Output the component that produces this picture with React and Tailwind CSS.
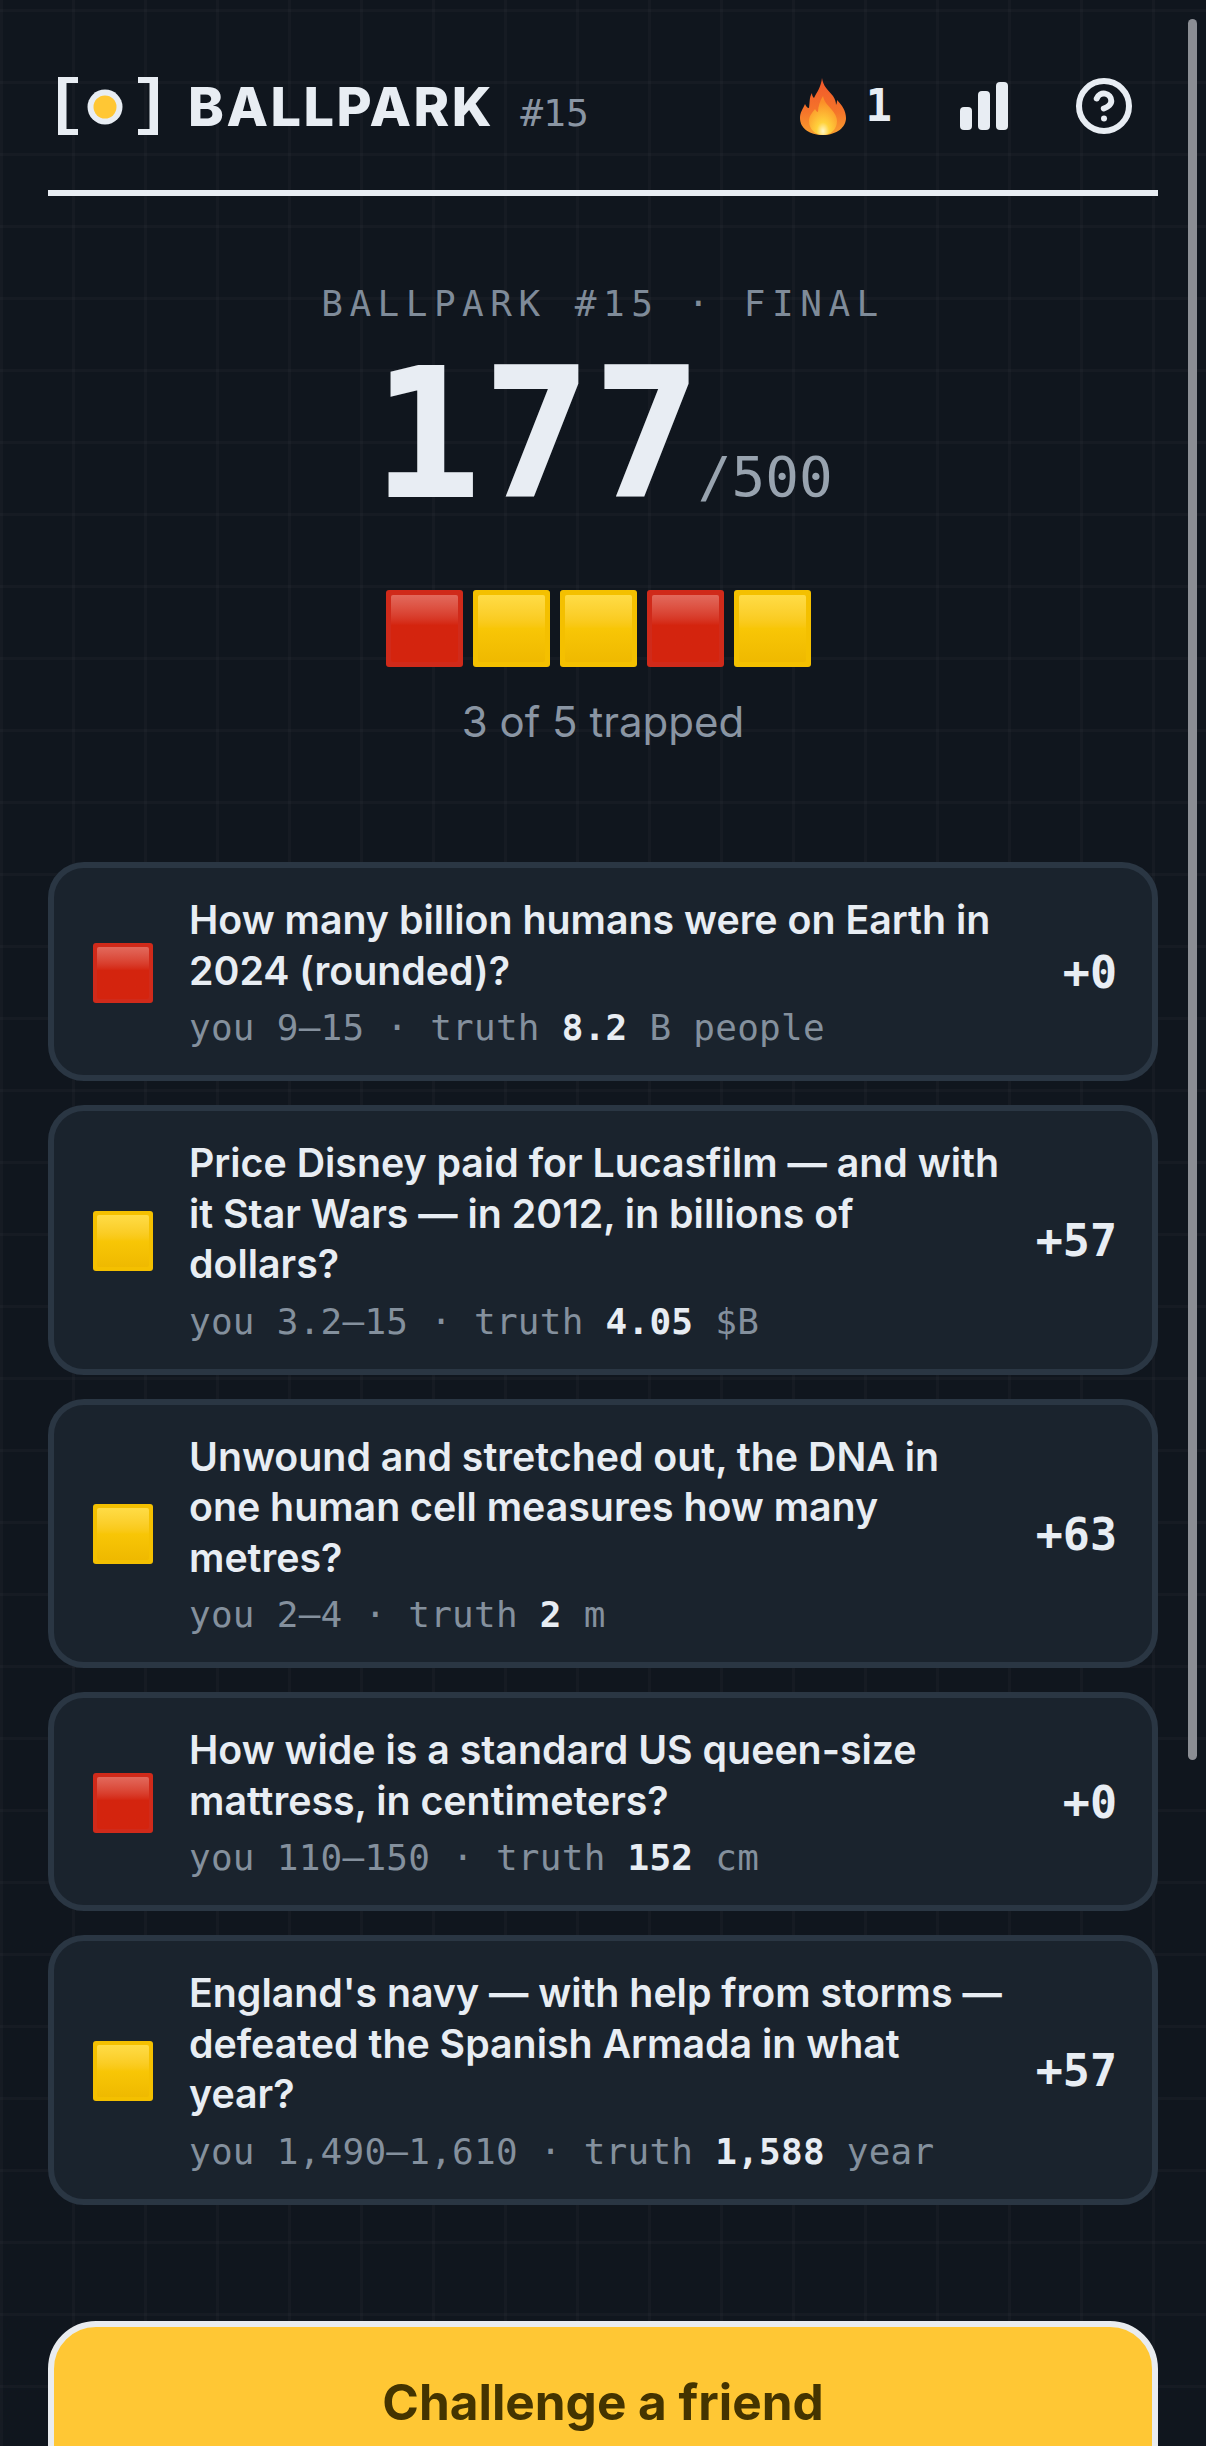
import { CircleHelp } from "lucide-react";

const rounds = [
  { id: 1, trapped: false, question: "How many billion humans were on Earth in 2024 (rounded)?", range: "9—15", truth: "8.2", unit: "B people", score: "+0" },
  { id: 2, trapped: true, question: "Price Disney paid for Lucasfilm — and with it Star Wars — in 2012, in billions of dollars?", range: "3.2—15", truth: "4.05", unit: "$B", score: "+57" },
  { id: 3, trapped: true, question: "Unwound and stretched out, the DNA in one human cell measures how many metres?", range: "2—4", truth: "2", unit: "m", score: "+63" },
  { id: 4, trapped: false, question: "How wide is a standard US queen-size mattress, in centimeters?", range: "110—150", truth: "152", unit: "cm", score: "+0" },
  { id: 5, trapped: true, question: "England's navy — with help from storms — defeated the Spanish Armada in what year?", range: "1,490—1,610", truth: "1,588", unit: "year", score: "+57" },
];

const MONO = "font-['DejaVu_Sans_Mono','Liberation_Mono',monospace]";

function Square({ yellow, big }) {
  const size = big ? "h-[77px] w-[77px] p-[5px]" : "mb-[3px] h-[60px] w-[60px] p-[4px]";
  const outer = yellow ? "bg-[#f4c000]" : "bg-[#d02a1a]";
  const inner = yellow
    ? "bg-gradient-to-b from-[#ffdc45] via-[#f8c606] via-50% to-[#efb900]"
    : "bg-gradient-to-b from-[#e2695c] via-[#d4240e] via-45% to-[#d4240e]";
  return (
    <div className={`${size} ${outer} shrink-0 rounded-[3px]`}>
      <div className={`h-full w-full rounded-[2px] ${inner}`} />
    </div>
  );
}

function Logo() {
  return (
    <svg width="100" height="58" viewBox="0 0 100 58" className="shrink-0">
      <path d="M0 0h20v6H8.5v46H20v6H0z" fill="#e8edf3" />
      <path d="M80 0h20v58H80v-6h11.5V6H80z" fill="#e8edf3" />
      <circle cx="47" cy="30" r="17.5" fill="#e8edf3" />
      <circle cx="47" cy="30" r="11.5" fill="#ffc734" />
    </svg>
  );
}

function Flame() {
  return (
    <svg width="46" height="57" viewBox="0 0 46 57" className="shrink-0">
      <defs>
        <linearGradient id="flameOuter" x1="0" y1="0" x2="0" y2="1">
          <stop offset="0" stopColor="#f0562b" />
          <stop offset="0.6" stopColor="#f5752a" />
          <stop offset="1" stopColor="#f9a02f" />
        </linearGradient>
        <radialGradient id="flameInner" cx="0.5" cy="0.9" r="0.75">
          <stop offset="0" stopColor="#fff6c8" />
          <stop offset="0.3" stopColor="#ffd23c" />
          <stop offset="1" stopColor="#fb8f28" />
        </radialGradient>
      </defs>
      <path
        d="M22 0c1 8 6 12 11 18 2 3 3 6 3 9 1-2 1-4 1-5 5 5 9 11 9 18 0 9-9 17-23 17S0 50 0 40c0-6 3-9 5-14 1 2 2 4 4 4 1-6 0-10 3-15 0 3 1 4 2 5 3-6 7-11 8-20z"
        fill="url(#flameOuter)"
      />
      <path
        d="M23 18c1 6 5 9 9 14 3 4 5 7 5 11 0 8-6 14-14 14S9 51 9 43c0-5 3-8 6-12 1 2 2 3 3 3 0-6 2-11 5-16z"
        fill="url(#flameInner)"
      />
    </svg>
  );
}

function Bars() {
  return (
    <div className="flex h-[48px] items-end gap-[6px]">
      <div className="h-[23px] w-[12px] rounded-[4px] bg-[#e8edf3]" />
      <div className="h-[39px] w-[12px] rounded-[4px] bg-[#e8edf3]" />
      <div className="h-[48px] w-[12px] rounded-[4px] bg-[#e8edf3]" />
    </div>
  );
}

function RoundCard({ round }) {
  return (
    <div className="flex items-center rounded-[36px] border-[6px] border-[#2a3643] bg-[#1a232d] pb-[22px] pl-[39px] pr-[35px] pt-[27px]">
      <Square yellow={round.trapped} />
      <div className="ml-[36px] mr-[31px] min-w-0 flex-1">
        <p className="text-[39.3px] font-semibold leading-[50.5px] text-[#e8edf3]">{round.question}</p>
        <p className={`${MONO} mt-[6px] text-[36px] leading-[51px] tracking-[0.25px] text-[#84909d]`}>
          you {round.range} · truth <span className="font-bold text-[#e8edf3]">{round.truth}</span> {round.unit}
        </p>
      </div>
      <div className={`${MONO} mb-[3px] shrink-0 text-right text-[45px] font-bold text-[#e8edf3]`}>{round.score}</div>
    </div>
  );
}

export default function App() {
  return (
    <div className="relative h-[2446px] overflow-hidden bg-[#10161e] bg-[linear-gradient(rgba(255,255,255,0.025)_3px,transparent_3px),linear-gradient(90deg,rgba(255,255,255,0.025)_3px,transparent_3px)] bg-[size:72px_72px] bg-[position:0px_9px] px-[48px] font-['Inter',sans-serif]">
      <header className="flex h-[196px] items-center justify-between border-b-[6px] border-[#e8edf3] pb-[24px] pl-[10px] pr-[24px] pt-[46px]">
        <div className="flex items-center">
          <Logo />
          <span className="ml-[30px] text-[54px] font-extrabold tracking-[2.5px] text-[#e8edf3]">BALLPARK</span>
          <span className={`${MONO} ml-[26px] mt-[14px] text-[38px] text-[#8a95a3]`}>#15</span>
        </div>
        <div className="flex items-center">
          <Flame />
          <span className={`${MONO} ml-[20px] text-[44px] font-bold text-[#e8edf3]`}>1</span>
          <div className="ml-[68px]">
            <Bars />
          </div>
          <CircleHelp size={60} strokeWidth={2.4} color="#e8edf3" className="ml-[66px]" />
        </div>
      </header>

      <section className="flex flex-col items-center pt-[81px]">
        <p className={`${MONO} text-[36px] leading-[54px] tracking-[6.5px] text-[#7f8b99]`}>BALLPARK #15 · FINAL</p>
        <div className="mt-[16px] flex items-baseline">
          <span className={`${MONO} text-[178px] font-bold leading-[176px] tracking-[3px] text-[#e8edf3] [-webkit-text-stroke:2px_#e8edf3]`}>177</span>
          <span className={`${MONO} -ml-[6px] text-[56px] text-[#98a3af]`}>/500</span>
        </div>
        <div className="mr-[9px] mt-[67px] flex gap-[10px]">
          <Square big />
          <Square big yellow />
          <Square big yellow />
          <Square big />
          <Square big yellow />
        </div>
        <p className="mt-[25px] text-[42px] leading-[60px] text-[#8a95a3]">3 of 5 trapped</p>
      </section>

      <section className="mt-[110px] flex flex-col gap-[24px]">
        {rounds.map((round) => (
          <RoundCard key={round.id} round={round} />
        ))}
      </section>

      <button className="mt-[116px] flex h-[200px] w-full justify-center rounded-[48px] border-[6px] border-[#e9ecef] bg-[#ffc734] pt-[38px] text-[49.5px] font-bold text-[#443400]">
        Challenge a friend
      </button>

      <div className="absolute right-[9px] top-[19px] h-[1741px] w-[9px] rounded-full bg-[#8b8e94]" />
    </div>
  );
}
